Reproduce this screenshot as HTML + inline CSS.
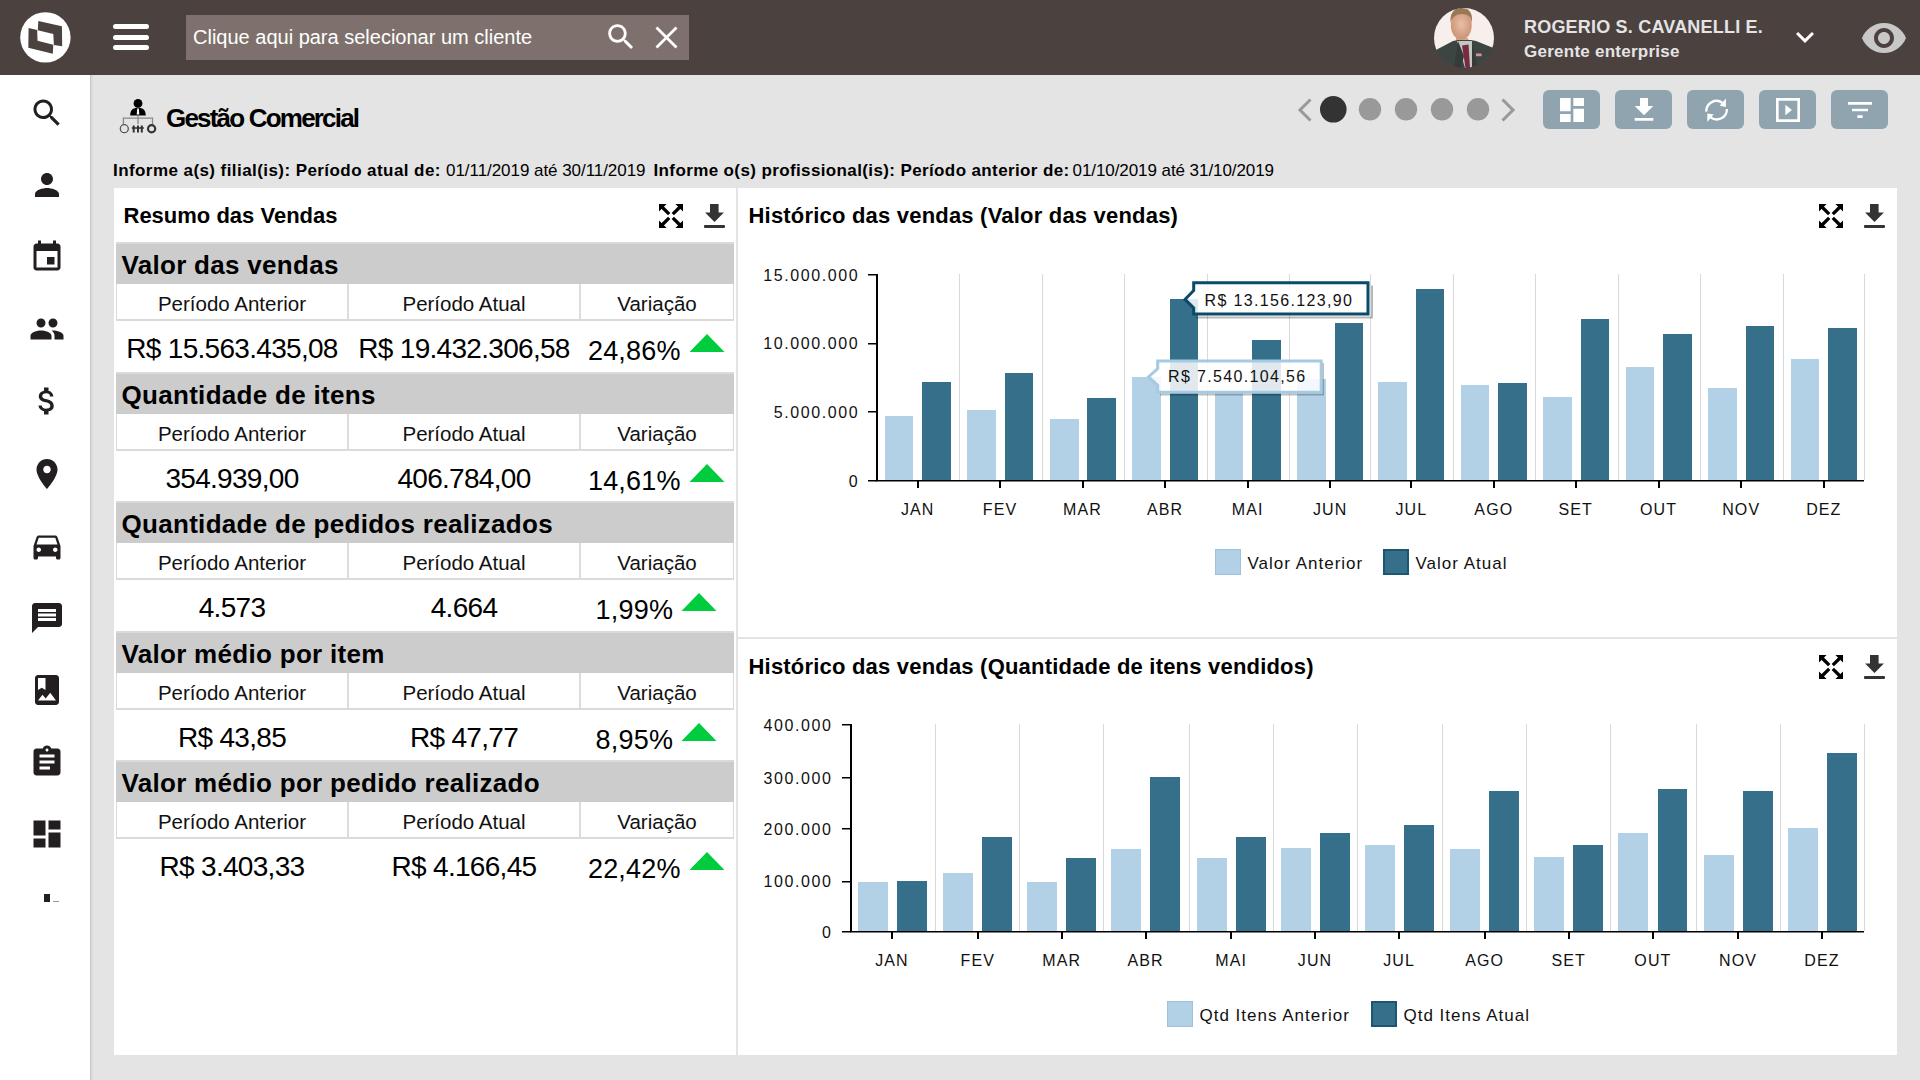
<!DOCTYPE html>
<html><head><meta charset="utf-8"><title>Gestão Comercial</title>
<style>
html,body{margin:0;padding:0;width:1920px;height:1080px;overflow:hidden;background:#e3e3e3;font-family:"Liberation Sans", sans-serif;}
body{position:relative;}
</style></head><body>
<div style="position:absolute;left:0px;top:0px;width:1920px;height:75px;background:#4b4240;"></div>
<svg style="position:absolute;left:15px;top:8px" width="60" height="60" viewBox="0 0 60 60">
<circle cx="30.4" cy="29.4" r="25.2" fill="#fff"/>
<path d="M23.3 13.1 L46.9 18.3 L47.2 38.3 L38.9 36.9 L38.3 26.1 L22.8 22.2 Z" fill="#4b4240"/>
<path d="M13.6 20 L22.2 21.9 L22.5 32.8 L38.3 36.7 L37.8 45.8 L13.3 39.7 Z" fill="#4b4240"/>
</svg>
<div style="position:absolute;left:113px;top:24px;width:36px;height:5px;border-radius:3px;background:#fff"></div>
<div style="position:absolute;left:113px;top:34.5px;width:36px;height:5px;border-radius:3px;background:#fff"></div>
<div style="position:absolute;left:113px;top:45px;width:36px;height:5px;border-radius:3px;background:#fff"></div>
<div style="position:absolute;left:186px;top:15px;width:503px;height:45px;background:#7e716d;"></div>
<div style="position:absolute;top:27.47px;font-size:20px;line-height:20px;font-weight:normal;color:#fff;white-space:nowrap;left:193.00px;">Clique aqui para selecionar um cliente</div>
<svg style="position:absolute;left:604px;top:20px" width="34" height="34" viewBox="0 0 24 24"><path fill="#fff" d="M15.5 14h-.79l-.28-.27C15.41 12.59 16 11.11 16 9.5 16 5.91 13.09 3 9.5 3S3 5.91 3 9.5 5.91 16 9.5 16c1.61 0 3.09-.59 4.23-1.57l.27.28v.79l5 4.99L20.49 19l-4.99-5zm-6 0C7.01 14 5 11.99 5 9.5S7.01 5 9.5 5 14 7.01 14 9.5 11.99 14 9.5 14z"/></svg>
<svg style="position:absolute;left:654px;top:25px" width="25" height="25" viewBox="0 0 25 25"><path d="M2.5 2.5 L22.5 22.5 M22.5 2.5 L2.5 22.5" stroke="#fff" stroke-width="2.8"/></svg>
<svg style="position:absolute;left:1434px;top:8px" width="60" height="60" viewBox="0 0 60 60">
<defs><clipPath id="av"><circle cx="30" cy="30" r="30"/></clipPath>
<filter id="avb"><feGaussianBlur stdDeviation="0.5"/></filter>
<radialGradient id="face" cx="0.5" cy="0.45" r="0.6"><stop offset="0" stop-color="#e9c0a8"/><stop offset="1" stop-color="#c98f6e"/></radialGradient></defs>
<g clip-path="url(#av)"><g filter="url(#avb)">
<rect width="60" height="60" fill="#f7efeb"/>
<path d="M22 30 L34 30 L36 38 L22 38 Z" fill="#d6a287"/>
<path d="M-2 60 L0 43 L19 33 L24 32 L37 32 L42 33 L62 41 L62 60 Z" fill="#3e4542"/>
<path d="M23 33 L38 33 L38 60 L31 60 Z" fill="#c3c9c2"/>
<path d="M28 37.5 L34.5 36.5 L36 60 L31.5 60 Z" fill="#7a2a40"/>
<path d="M24 33 L30 48 L27 60 L20 60 Z" fill="#353b39"/>
<path d="M38 33 L38 60 L44 60 L40 45 Z" fill="#353b39"/>
<ellipse cx="27.3" cy="17.5" rx="10.4" ry="14" fill="url(#face)"/>
<path d="M16.5 15 C15.5 3 22 0 27 0 C34 0 39 3 38 15 C37 9 35 6.5 28 6 C21 6.5 18 9 16.5 15 Z" fill="#9a7854"/>
<rect x="42" y="45.5" width="5.6" height="2.7" fill="#d89090"/>
</g></g></svg>
<div style="position:absolute;top:17.86px;font-size:18px;line-height:18px;font-weight:bold;color:#e4e4e4;white-space:nowrap;letter-spacing:0.2px;left:1524.00px;">ROGERIO S. CAVANELLI E.</div>
<div style="position:absolute;top:43.21px;font-size:17px;line-height:17px;font-weight:bold;color:#e4e4e4;white-space:nowrap;letter-spacing:0.25px;left:1524.00px;">Gerente enterprise</div>
<svg style="position:absolute;left:1787px;top:19px" width="36" height="36" viewBox="0 0 24 24"><path fill="#fff" d="M7.41 8.59L12 13.17l4.59-4.58L18 10l-6 6-6-6 1.41-1.41z"/></svg>
<svg style="position:absolute;left:1860px;top:12px" width="48" height="52" viewBox="0 0 24 24"><path fill="#c8c8c8" d="M12 4.5C7 4.5 2.73 7.61 1 12c1.73 4.39 6 7.5 11 7.5s9.27-3.11 11-7.5c-1.73-4.39-6-7.5-11-7.5zM12 17c-2.76 0-5-2.24-5-5s2.24-5 5-5 5 2.24 5 5-2.24 5-5 5zm0-8c-1.66 0-3 1.34-3 3s1.34 3 3 3 3-1.34 3-3-1.34-3-3-3z"/></svg>
<div style="position:absolute;left:0px;top:75px;width:90px;height:1005px;background:#ffffff;"></div>
<div style="position:absolute;left:90px;top:75px;width:1px;height:1005px;background:#c9c9c9;"></div>
<div style="position:absolute;left:91px;top:75px;width:3px;height:1005px;background:linear-gradient(to right,#d6d6d6,#e3e3e3);"></div>
<svg style="position:absolute;left:28.5px;top:95.0px" width="36" height="36" viewBox="0 0 24 24"><path fill="#231f20" d="M15.5 14h-.79l-.28-.27C15.41 12.59 16 11.11 16 9.5 16 5.91 13.09 3 9.5 3S3 5.91 3 9.5 5.91 16 9.5 16c1.61 0 3.09-.59 4.23-1.57l.27.28v.79l5 4.99L20.49 19l-4.99-5zm-6 0C7.01 14 5 11.99 5 9.5S7.01 5 9.5 5 14 7.01 14 9.5 11.99 14 9.5 14z"/></svg>
<svg style="position:absolute;left:28.5px;top:167.1px" width="36" height="36" viewBox="0 0 24 24"><path fill="#231f20" d="M12 12c2.21 0 4-1.79 4-4s-1.79-4-4-4-4 1.79-4 4 1.79 4 4 4zm0 2c-2.67 0-8 1.34-8 4v2h16v-2c0-2.66-5.33-4-8-4z"/></svg>
<svg style="position:absolute;left:28.5px;top:239.2px" width="36" height="36" viewBox="0 0 24 24"><path fill="#231f20" d="M17 12h-5v5h5v-5zM16 1v2H8V1H6v2H5c-1.11 0-1.99.9-1.99 2L3 19c0 1.1.89 2 2 2h14c1.1 0 2-.9 2-2V5c0-1.1-.9-2-2-2h-1V1h-2zm3 18H5V8h14v11z"/></svg>
<svg style="position:absolute;left:28.5px;top:311.3px" width="36" height="36" viewBox="0 0 24 24"><path fill="#231f20" d="M16 11c1.66 0 2.99-1.34 2.99-3S17.66 5 16 5c-1.66 0-3 1.34-3 3s1.34 3 3 3zm-8 0c1.66 0 2.99-1.34 2.99-3S9.66 5 8 5C6.34 5 5 6.34 5 8s1.34 3 3 3zm0 2c-2.33 0-7 1.17-7 3.5V19h14v-2.5c0-2.33-4.67-3.5-7-3.5zm8 0c-.29 0-.62.02-.97.05 1.16.84 1.970 1.97 1.97 3.45V19h6v-2.5c0-2.33-4.67-3.5-7-3.5z"/></svg>
<svg style="position:absolute;left:28.5px;top:383.4px" width="36" height="36" viewBox="0 0 24 24"><path fill="#231f20" d="M11.8 10.9c-2.27-.59-3-1.2-3-2.15 0-1.09 1.01-1.85 2.7-1.85 1.78 0 2.440.85 2.5 2.1h2.21c-.07-1.72-1.12-3.3-3.21-3.81V3h-3v2.16c-1.94.42-3.5 1.68-3.5 3.61 0 2.310 1.91 3.46 4.7 4.13 2.5.6 3 1.48 3 2.41 0 .69-.49 1.79-2.7 1.79-2.06 0-2.87-.92-2.98-2.1h-2.2c.12 2.19 1.76 3.42 3.68 3.83V21h3v-2.15c1.95-.37 3.5-1.5 3.5-3.55 0-2.84-2.43-3.81-4.7-4.4z"/></svg>
<svg style="position:absolute;left:28.5px;top:455.5px" width="36" height="36" viewBox="0 0 24 24"><path fill="#231f20" d="M12 2C8.13 2 5 5.13 5 9c0 5.25 7 13 7 13s7-7.75 7-13c0-3.87-3.13-7-7-7zm0 9.5c-1.38 0-2.5-1.12-2.5-2.5s1.12-2.5 2.5-2.5 2.5 1.12 2.5 2.5-1.12 2.5-2.5 2.5z"/></svg>
<svg style="position:absolute;left:28.5px;top:527.6px" width="36" height="36" viewBox="0 0 24 24"><path fill="#231f20" d="M18.92 6.01C18.72 5.42 18.16 5 17.5 5h-11c-.66 0-1.21.42-1.42 1.01L3 12v8c0 .55.45 1 1 1h1c.55 0 1-.45 1-1v-1h12v1c0 .55.45 1 1 1h1c.55 0 1-.45 1-1v-8l-2.08-5.990zM6.5 16c-.83 0-1.5-.67-1.5-1.5S5.67 13 6.5 13s1.5.67 1.5 1.5S7.33 16 6.5 16zm11 0c-.83 0-1.5-.67-1.5-1.5s.67-1.5 1.5-1.5 1.5.67 1.5 1.5-.67 1.5-1.5 1.5zM5 11l1.5-4.5h11L19 11H5z"/></svg>
<svg style="position:absolute;left:28.5px;top:599.7px" width="36" height="36" viewBox="0 0 24 24"><path fill="#231f20" d="M20 2H4c-1.1 0-1.99.9-1.99 2L2 22l4-4h14c1.1 0 2-.9 2-2V4c0-1.1-.9-2-2-2zm-2 12H6v-2h12v2zm0-3H6V9h12v2zm0-3H6V6h12v2z"/></svg>
<svg style="position:absolute;left:28.5px;top:671.8px" width="36" height="36" viewBox="0 0 24 24"><path fill="#231f20" d="M18 2H6c-1.1 0-2 .9-2 2v16c0 1.1.9 2 2 2h12c1.1 0 2-.9 2-2V4c0-1.1-.9-2-2-2zM6 4h5v8l-2.5-1.5L6 12V4zm0 15l3-3.86 2.14 2.58 3-3.86L18 19H6z"/></svg>
<svg style="position:absolute;left:28.5px;top:743.9px" width="36" height="36" viewBox="0 0 24 24"><path fill="#231f20" d="M19 3h-4.18C14.4 1.84 13.3 1 12 1c-1.3 0-2.4.84-2.82 2H5c-1.1 0-2 .9-2 2v14c0 1.1.9 2 2 2h14c1.1 0 2-.9 2-2V5c0-1.1-.9-2-2-2zm-7 0c.55 0 1 .45 1 1s-.45 1-1 1-1-.45-1-1 .45-1 1-1zm2 14H7v-2h7v2zm3-4H7v-2h10v2zm0-4H7V7h10v2z"/></svg>
<svg style="position:absolute;left:28.5px;top:816.0px" width="36" height="36" viewBox="0 0 24 24"><path fill="#231f20" d="M3 13h8V3H3v10zm0 8h8v-6H3v6zm10 0h8V11h-8v10zm0-18v6h8V3h-8z"/></svg>
<div style="position:absolute;left:44px;top:894px;width:6px;height:8px;background:#231f20;"></div>
<div style="position:absolute;left:53px;top:901px;width:6px;height:1px;background:#999;"></div>
<div style="position:absolute;left:94px;top:75px;width:1826px;height:1005px;background:#e4e4e4;"></div>
<svg style="position:absolute;left:115px;top:95px" width="45" height="42" viewBox="0 0 45 42">
<circle cx="23" cy="8.4" r="4.4" fill="#000"/>
<path d="M15.2 20.4 C15.2 15 18 12.8 23 12.8 C28 12.8 30.7 15 30.7 20.4 Z" fill="#000"/>
<path d="M22.2 13.5 L23.8 13.5 L24.3 19.5 L21.7 19.5 Z" fill="#fff"/>
<path d="M8.4 29 L8.4 23.2 L37.5 23.2 L37.5 29 M23 21 L23 29" stroke="#888" stroke-width="1.3" fill="none"/>
<circle cx="9.3" cy="33.7" r="4" stroke="#555" stroke-width="1.3" fill="none"/>
<path d="M18.7 30.5 v7 M23 30.5 v7 M26.8 30.5 v7" stroke="#333" stroke-width="2"/><path d="M16.8 33 h12" stroke="#333" stroke-width="1.6"/>
<circle cx="36.6" cy="33.7" r="3.6" stroke="#333" stroke-width="2.2" fill="none"/>
</svg>
<div style="position:absolute;top:105.19px;font-size:26px;line-height:26px;font-weight:bold;color:#000;white-space:nowrap;letter-spacing:-1.8px;left:166.00px;">Gestão Comercial</div>
<svg style="position:absolute;left:1290px;top:92px" width="240" height="36" viewBox="0 0 240 36"><path d="M20.5 7.5 L10 18 L20.5 28.5" stroke="#999" stroke-width="3" fill="none"/><circle cx="43.3" cy="17.3" r="13.3" fill="#333"/><circle cx="80" cy="17.3" r="11.2" fill="#999"/><circle cx="116" cy="17.3" r="11.2" fill="#999"/><circle cx="152" cy="17.3" r="11.2" fill="#999"/><circle cx="188" cy="17.3" r="11.2" fill="#999"/><path d="M212.5 7.5 L223 18 L212.5 28.5" stroke="#999" stroke-width="3" fill="none"/></svg>
<div style="position:absolute;left:1543px;top:90px;width:57px;height:39px;background:#8fa4ae;border-radius:6px;"></div>
<svg style="position:absolute;left:1555.5px;top:93.5px" width="32" height="32" viewBox="0 0 24 24"><path fill="#fff" d="M3 13h8V3H3v10zm0 8h8v-6H3v6zm10 0h8V11h-8v10zm0-18v6h8V3h-8z"/></svg>
<div style="position:absolute;left:1615px;top:90px;width:57px;height:39px;background:#8fa4ae;border-radius:6px;"></div>
<svg style="position:absolute;left:1627.5px;top:93.5px" width="32" height="32" viewBox="0 0 24 24"><path fill="#fff" d="M19 9h-4V3H9v6H5l7 7 7-7zM5 18v2h14v-2H5z"/></svg>
<div style="position:absolute;left:1687px;top:90px;width:57px;height:39px;background:#8fa4ae;border-radius:6px;"></div>
<svg style="position:absolute;left:1699.5px;top:93.5px" width="32" height="32" viewBox="0 0 24 24"><g transform="scale(0.75)"><path d="M6.3 17.6 A10.2 10.2 0 0 1 22.6 9" stroke="#fff" stroke-width="2.4" fill="none"/><path d="M26.9 15 A10.2 10.2 0 0 1 10.6 23.4" stroke="#fff" stroke-width="2.4" fill="none"/><path d="M25.9 4.5 L25.9 12.9 L19.6 11.8 Z M7.3 27.9 L7.3 19.5 L13.6 20.6 Z" fill="#fff"/></g></svg>
<div style="position:absolute;left:1759px;top:90px;width:57px;height:39px;background:#8fa4ae;border-radius:6px;"></div>
<svg style="position:absolute;left:1771.5px;top:93.5px" width="32" height="32" viewBox="0 0 24 24"><path fill="#fff" d="M3 3 h18 v18 h-18 z M5 5 v14 h14 v-14 z M10 8 l5 4 l-5 4 z"/></svg>
<div style="position:absolute;left:1831px;top:90px;width:57px;height:39px;background:#8fa4ae;border-radius:6px;"></div>
<svg style="position:absolute;left:1843.5px;top:93.5px" width="32" height="32" viewBox="0 0 24 24"><path fill="#fff" d="M10 18h4v-2h-4v2zM3 6v2h18V6H3zm3 7h12v-2H6v2z"/></svg>
<div style="position:absolute;top:162.01px;font-size:17px;line-height:17px;font-weight:bold;color:#000;white-space:nowrap;letter-spacing:0.43px;left:113.00px;">Informe a(s) filial(is): Período atual de:</div>
<div style="position:absolute;top:162.01px;font-size:17px;line-height:17px;font-weight:normal;color:#000;white-space:nowrap;letter-spacing:-0.05px;left:446.00px;">01/11/2019 até 30/11/2019</div>
<div style="position:absolute;top:162.01px;font-size:17px;line-height:17px;font-weight:bold;color:#000;white-space:nowrap;letter-spacing:0.38px;left:653.50px;">Informe o(s) profissional(is): Período anterior de:</div>
<div style="position:absolute;top:162.01px;font-size:17px;line-height:17px;font-weight:normal;color:#000;white-space:nowrap;letter-spacing:-0.07px;left:1072.50px;">01/10/2019 até 31/10/2019</div>
<div style="position:absolute;left:114px;top:188px;width:1783px;height:867px;background:#ffffff;"></div>
<div style="position:absolute;left:736px;top:188px;width:2px;height:867px;background:#e4e4e4;"></div>
<div style="position:absolute;left:738px;top:637px;width:1159px;height:2px;background:#e4e4e4;"></div>
<div style="position:absolute;top:204.78px;font-size:22px;line-height:22px;font-weight:bold;color:#000;white-space:nowrap;left:123.50px;">Resumo das Vendas</div>
<svg style="position:absolute;left:659px;top:204px" width="24" height="24" viewBox="0 0 24 24">
<path fill="#000" d="M0 0h7.6L0 7.6z M24 0h-7.6L24 7.6z M0 24h7.6L0 16.4z M24 24h-7.6L24 16.4z"/>
<path d="M3 3 L10.2 10.2 M21 3 L13.8 10.2 M3 21 L10.2 13.8 M21 21 L13.8 13.8" stroke="#000" stroke-width="3.3"/>
</svg>
<svg style="position:absolute;left:704px;top:204px" width="21" height="24" viewBox="0 0 21 24">
<path fill="#333" d="M6 0h8.6v8.5h5.3l-9.4 9.4-9.4-9.4h4.9z"/><rect x="0" y="21" width="21" height="3" rx="1" fill="#333"/>
</svg>
<div style="position:absolute;left:116px;top:242px;width:618px;height:2px;background:#dadada;"></div>
<div style="position:absolute;left:116px;top:244px;width:618px;height:40px;background:#cccccc;"></div>
<div style="position:absolute;top:251.89px;font-size:26px;line-height:26px;font-weight:bold;color:#000;white-space:nowrap;letter-spacing:0.3px;left:121.50px;">Valor das vendas</div>
<div style="position:absolute;left:116px;top:284px;width:1px;height:37px;background:#dadada;"></div>
<div style="position:absolute;left:733px;top:284px;width:1px;height:37px;background:#dadada;"></div>
<div style="position:absolute;left:116px;top:319px;width:618px;height:2px;background:#dadada;"></div>
<div style="position:absolute;left:347px;top:284px;width:2px;height:35px;background:#dcdcdc;"></div>
<div style="position:absolute;left:579px;top:284px;width:2px;height:35px;background:#dcdcdc;"></div>
<div style="position:absolute;top:293.55px;font-size:20.5px;line-height:20.5px;font-weight:normal;color:#111;white-space:nowrap;left:-268.00px;width:1000px;text-align:center;">Período Anterior</div>
<div style="position:absolute;top:293.55px;font-size:20.5px;line-height:20.5px;font-weight:normal;color:#111;white-space:nowrap;left:-36.00px;width:1000px;text-align:center;">Período Atual</div>
<div style="position:absolute;top:293.55px;font-size:20.5px;line-height:20.5px;font-weight:normal;color:#111;white-space:nowrap;left:157.00px;width:1000px;text-align:center;">Variação</div>
<div style="position:absolute;top:335.00px;font-size:28px;line-height:28px;font-weight:normal;color:#000;white-space:nowrap;letter-spacing:-0.7px;left:-268.00px;width:1000px;text-align:center;">R$ 15.563.435,08</div>
<div style="position:absolute;top:335.00px;font-size:28px;line-height:28px;font-weight:normal;color:#000;white-space:nowrap;letter-spacing:-0.7px;left:-36.00px;width:1000px;text-align:center;">R$ 19.432.306,58</div>
<div style="position:absolute;top:337.54px;font-size:27px;line-height:27px;font-weight:normal;color:#000;white-space:nowrap;letter-spacing:0.2px;left:587.95px;">24,86%</div>
<svg style="position:absolute;left:689.0px;top:334px" width="36" height="18" viewBox="0 0 36 18"><path d="M18 0 L35.5 18 L0.5 18Z" fill="#00cc3d"/></svg>
<div style="position:absolute;left:116px;top:372px;width:618px;height:2px;background:#dadada;"></div>
<div style="position:absolute;left:116px;top:374px;width:618px;height:40px;background:#cccccc;"></div>
<div style="position:absolute;top:381.89px;font-size:26px;line-height:26px;font-weight:bold;color:#000;white-space:nowrap;letter-spacing:0.3px;left:121.50px;">Quantidade de itens</div>
<div style="position:absolute;left:116px;top:414px;width:1px;height:37px;background:#dadada;"></div>
<div style="position:absolute;left:733px;top:414px;width:1px;height:37px;background:#dadada;"></div>
<div style="position:absolute;left:116px;top:449px;width:618px;height:2px;background:#dadada;"></div>
<div style="position:absolute;left:347px;top:414px;width:2px;height:35px;background:#dcdcdc;"></div>
<div style="position:absolute;left:579px;top:414px;width:2px;height:35px;background:#dcdcdc;"></div>
<div style="position:absolute;top:423.55px;font-size:20.5px;line-height:20.5px;font-weight:normal;color:#111;white-space:nowrap;left:-268.00px;width:1000px;text-align:center;">Período Anterior</div>
<div style="position:absolute;top:423.55px;font-size:20.5px;line-height:20.5px;font-weight:normal;color:#111;white-space:nowrap;left:-36.00px;width:1000px;text-align:center;">Período Atual</div>
<div style="position:absolute;top:423.55px;font-size:20.5px;line-height:20.5px;font-weight:normal;color:#111;white-space:nowrap;left:157.00px;width:1000px;text-align:center;">Variação</div>
<div style="position:absolute;top:465.00px;font-size:28px;line-height:28px;font-weight:normal;color:#000;white-space:nowrap;letter-spacing:-0.7px;left:-268.00px;width:1000px;text-align:center;">354.939,00</div>
<div style="position:absolute;top:465.00px;font-size:28px;line-height:28px;font-weight:normal;color:#000;white-space:nowrap;letter-spacing:-0.7px;left:-36.00px;width:1000px;text-align:center;">406.784,00</div>
<div style="position:absolute;top:467.54px;font-size:27px;line-height:27px;font-weight:normal;color:#000;white-space:nowrap;letter-spacing:0.2px;left:587.95px;">14,61%</div>
<svg style="position:absolute;left:689.0px;top:464px" width="36" height="18" viewBox="0 0 36 18"><path d="M18 0 L35.5 18 L0.5 18Z" fill="#00cc3d"/></svg>
<div style="position:absolute;left:116px;top:501px;width:618px;height:2px;background:#dadada;"></div>
<div style="position:absolute;left:116px;top:503px;width:618px;height:40px;background:#cccccc;"></div>
<div style="position:absolute;top:510.89px;font-size:26px;line-height:26px;font-weight:bold;color:#000;white-space:nowrap;letter-spacing:0.3px;left:121.50px;">Quantidade de pedidos realizados</div>
<div style="position:absolute;left:116px;top:543px;width:1px;height:37px;background:#dadada;"></div>
<div style="position:absolute;left:733px;top:543px;width:1px;height:37px;background:#dadada;"></div>
<div style="position:absolute;left:116px;top:578px;width:618px;height:2px;background:#dadada;"></div>
<div style="position:absolute;left:347px;top:543px;width:2px;height:35px;background:#dcdcdc;"></div>
<div style="position:absolute;left:579px;top:543px;width:2px;height:35px;background:#dcdcdc;"></div>
<div style="position:absolute;top:552.55px;font-size:20.5px;line-height:20.5px;font-weight:normal;color:#111;white-space:nowrap;left:-268.00px;width:1000px;text-align:center;">Período Anterior</div>
<div style="position:absolute;top:552.55px;font-size:20.5px;line-height:20.5px;font-weight:normal;color:#111;white-space:nowrap;left:-36.00px;width:1000px;text-align:center;">Período Atual</div>
<div style="position:absolute;top:552.55px;font-size:20.5px;line-height:20.5px;font-weight:normal;color:#111;white-space:nowrap;left:157.00px;width:1000px;text-align:center;">Variação</div>
<div style="position:absolute;top:594.00px;font-size:28px;line-height:28px;font-weight:normal;color:#000;white-space:nowrap;letter-spacing:-0.7px;left:-268.00px;width:1000px;text-align:center;">4.573</div>
<div style="position:absolute;top:594.00px;font-size:28px;line-height:28px;font-weight:normal;color:#000;white-space:nowrap;letter-spacing:-0.7px;left:-36.00px;width:1000px;text-align:center;">4.664</div>
<div style="position:absolute;top:596.54px;font-size:27px;line-height:27px;font-weight:normal;color:#000;white-space:nowrap;letter-spacing:0.2px;left:595.55px;">1,99%</div>
<svg style="position:absolute;left:681.4px;top:593px" width="36" height="18" viewBox="0 0 36 18"><path d="M18 0 L35.5 18 L0.5 18Z" fill="#00cc3d"/></svg>
<div style="position:absolute;left:116px;top:631px;width:618px;height:2px;background:#dadada;"></div>
<div style="position:absolute;left:116px;top:633px;width:618px;height:40px;background:#cccccc;"></div>
<div style="position:absolute;top:640.89px;font-size:26px;line-height:26px;font-weight:bold;color:#000;white-space:nowrap;letter-spacing:0.3px;left:121.50px;">Valor médio por item</div>
<div style="position:absolute;left:116px;top:673px;width:1px;height:37px;background:#dadada;"></div>
<div style="position:absolute;left:733px;top:673px;width:1px;height:37px;background:#dadada;"></div>
<div style="position:absolute;left:116px;top:708px;width:618px;height:2px;background:#dadada;"></div>
<div style="position:absolute;left:347px;top:673px;width:2px;height:35px;background:#dcdcdc;"></div>
<div style="position:absolute;left:579px;top:673px;width:2px;height:35px;background:#dcdcdc;"></div>
<div style="position:absolute;top:682.55px;font-size:20.5px;line-height:20.5px;font-weight:normal;color:#111;white-space:nowrap;left:-268.00px;width:1000px;text-align:center;">Período Anterior</div>
<div style="position:absolute;top:682.55px;font-size:20.5px;line-height:20.5px;font-weight:normal;color:#111;white-space:nowrap;left:-36.00px;width:1000px;text-align:center;">Período Atual</div>
<div style="position:absolute;top:682.55px;font-size:20.5px;line-height:20.5px;font-weight:normal;color:#111;white-space:nowrap;left:157.00px;width:1000px;text-align:center;">Variação</div>
<div style="position:absolute;top:724.00px;font-size:28px;line-height:28px;font-weight:normal;color:#000;white-space:nowrap;letter-spacing:-0.7px;left:-268.00px;width:1000px;text-align:center;">R$ 43,85</div>
<div style="position:absolute;top:724.00px;font-size:28px;line-height:28px;font-weight:normal;color:#000;white-space:nowrap;letter-spacing:-0.7px;left:-36.00px;width:1000px;text-align:center;">R$ 47,77</div>
<div style="position:absolute;top:726.54px;font-size:27px;line-height:27px;font-weight:normal;color:#000;white-space:nowrap;letter-spacing:0.2px;left:595.55px;">8,95%</div>
<svg style="position:absolute;left:681.4px;top:723px" width="36" height="18" viewBox="0 0 36 18"><path d="M18 0 L35.5 18 L0.5 18Z" fill="#00cc3d"/></svg>
<div style="position:absolute;left:116px;top:760px;width:618px;height:2px;background:#dadada;"></div>
<div style="position:absolute;left:116px;top:762px;width:618px;height:40px;background:#cccccc;"></div>
<div style="position:absolute;top:769.89px;font-size:26px;line-height:26px;font-weight:bold;color:#000;white-space:nowrap;letter-spacing:0.3px;left:121.50px;">Valor médio por pedido realizado</div>
<div style="position:absolute;left:116px;top:802px;width:1px;height:37px;background:#dadada;"></div>
<div style="position:absolute;left:733px;top:802px;width:1px;height:37px;background:#dadada;"></div>
<div style="position:absolute;left:116px;top:837px;width:618px;height:2px;background:#dadada;"></div>
<div style="position:absolute;left:347px;top:802px;width:2px;height:35px;background:#dcdcdc;"></div>
<div style="position:absolute;left:579px;top:802px;width:2px;height:35px;background:#dcdcdc;"></div>
<div style="position:absolute;top:811.55px;font-size:20.5px;line-height:20.5px;font-weight:normal;color:#111;white-space:nowrap;left:-268.00px;width:1000px;text-align:center;">Período Anterior</div>
<div style="position:absolute;top:811.55px;font-size:20.5px;line-height:20.5px;font-weight:normal;color:#111;white-space:nowrap;left:-36.00px;width:1000px;text-align:center;">Período Atual</div>
<div style="position:absolute;top:811.55px;font-size:20.5px;line-height:20.5px;font-weight:normal;color:#111;white-space:nowrap;left:157.00px;width:1000px;text-align:center;">Variação</div>
<div style="position:absolute;top:853.00px;font-size:28px;line-height:28px;font-weight:normal;color:#000;white-space:nowrap;letter-spacing:-0.7px;left:-268.00px;width:1000px;text-align:center;">R$ 3.403,33</div>
<div style="position:absolute;top:853.00px;font-size:28px;line-height:28px;font-weight:normal;color:#000;white-space:nowrap;letter-spacing:-0.7px;left:-36.00px;width:1000px;text-align:center;">R$ 4.166,45</div>
<div style="position:absolute;top:855.54px;font-size:27px;line-height:27px;font-weight:normal;color:#000;white-space:nowrap;letter-spacing:0.2px;left:587.95px;">22,42%</div>
<svg style="position:absolute;left:689.0px;top:852px" width="36" height="18" viewBox="0 0 36 18"><path d="M18 0 L35.5 18 L0.5 18Z" fill="#00cc3d"/></svg>
<div style="position:absolute;top:204.58px;font-size:22px;line-height:22px;font-weight:bold;color:#000;white-space:nowrap;letter-spacing:0.2px;left:748.50px;">Histórico das vendas (Valor das vendas)</div>
<svg style="position:absolute;left:1819px;top:203.8px" width="24" height="24" viewBox="0 0 24 24">
<path fill="#000" d="M0 0h7.6L0 7.6z M24 0h-7.6L24 7.6z M0 24h7.6L0 16.4z M24 24h-7.6L24 16.4z"/>
<path d="M3 3 L10.2 10.2 M21 3 L13.8 10.2 M3 21 L10.2 13.8 M21 21 L13.8 13.8" stroke="#000" stroke-width="3.3"/>
</svg>
<svg style="position:absolute;left:1864px;top:203.8px" width="21" height="24" viewBox="0 0 21 24">
<path fill="#333" d="M6 0h8.6v8.5h5.3l-9.4 9.4-9.4-9.4h4.9z"/><rect x="0" y="21" width="21" height="3" rx="1" fill="#333"/>
</svg>
<div style="position:absolute;left:959px;top:274px;width:1px;height:206px;background:#d9d9d9;"></div>
<div style="position:absolute;left:1042px;top:274px;width:1px;height:206px;background:#d9d9d9;"></div>
<div style="position:absolute;left:1124px;top:274px;width:1px;height:206px;background:#d9d9d9;"></div>
<div style="position:absolute;left:1207px;top:274px;width:1px;height:206px;background:#d9d9d9;"></div>
<div style="position:absolute;left:1289px;top:274px;width:1px;height:206px;background:#d9d9d9;"></div>
<div style="position:absolute;left:1370px;top:274px;width:1px;height:206px;background:#d9d9d9;"></div>
<div style="position:absolute;left:1453px;top:274px;width:1px;height:206px;background:#d9d9d9;"></div>
<div style="position:absolute;left:1535px;top:274px;width:1px;height:206px;background:#d9d9d9;"></div>
<div style="position:absolute;left:1618px;top:274px;width:1px;height:206px;background:#d9d9d9;"></div>
<div style="position:absolute;left:1700px;top:274px;width:1px;height:206px;background:#d9d9d9;"></div>
<div style="position:absolute;left:1783px;top:274px;width:1px;height:206px;background:#d9d9d9;"></div>
<div style="position:absolute;left:1864px;top:274px;width:1px;height:206px;background:#d9d9d9;"></div>
<div style="position:absolute;left:885px;top:416px;width:28px;height:64px;background:#b3d1e6;"></div>
<div style="position:absolute;left:922px;top:382px;width:29px;height:98px;background:#356f8a;"></div>
<div style="position:absolute;left:967px;top:410px;width:29px;height:70px;background:#b3d1e6;"></div>
<div style="position:absolute;left:1005px;top:373px;width:28px;height:107px;background:#356f8a;"></div>
<div style="position:absolute;left:1050px;top:419px;width:29px;height:61px;background:#b3d1e6;"></div>
<div style="position:absolute;left:1087px;top:398px;width:29px;height:82px;background:#356f8a;"></div>
<div style="position:absolute;left:1132px;top:377px;width:29px;height:103px;background:#b3d1e6;"></div>
<div style="position:absolute;left:1170px;top:299px;width:28px;height:181px;background:#356f8a;"></div>
<div style="position:absolute;left:1215px;top:392px;width:28px;height:88px;background:#b3d1e6;"></div>
<div style="position:absolute;left:1252px;top:340px;width:29px;height:140px;background:#356f8a;"></div>
<div style="position:absolute;left:1297px;top:379px;width:29px;height:101px;background:#b3d1e6;"></div>
<div style="position:absolute;left:1335px;top:323px;width:28px;height:157px;background:#356f8a;"></div>
<div style="position:absolute;left:1378px;top:382px;width:29px;height:98px;background:#b3d1e6;"></div>
<div style="position:absolute;left:1416px;top:289px;width:28px;height:191px;background:#356f8a;"></div>
<div style="position:absolute;left:1461px;top:385px;width:28px;height:95px;background:#b3d1e6;"></div>
<div style="position:absolute;left:1498px;top:383px;width:29px;height:97px;background:#356f8a;"></div>
<div style="position:absolute;left:1543px;top:397px;width:29px;height:83px;background:#b3d1e6;"></div>
<div style="position:absolute;left:1581px;top:319px;width:28px;height:161px;background:#356f8a;"></div>
<div style="position:absolute;left:1626px;top:367px;width:28px;height:113px;background:#b3d1e6;"></div>
<div style="position:absolute;left:1663px;top:334px;width:29px;height:146px;background:#356f8a;"></div>
<div style="position:absolute;left:1708px;top:388px;width:29px;height:92px;background:#b3d1e6;"></div>
<div style="position:absolute;left:1746px;top:326px;width:28px;height:154px;background:#356f8a;"></div>
<div style="position:absolute;left:1791px;top:359px;width:28px;height:121px;background:#b3d1e6;"></div>
<div style="position:absolute;left:1828px;top:328px;width:29px;height:152px;background:#356f8a;"></div>
<div style="position:absolute;left:876px;top:274px;width:2px;height:207px;background:#000;"></div>
<div style="position:absolute;left:876px;top:480px;width:988px;height:1px;background:#000;"></div>
<div style="position:absolute;left:876px;top:481px;width:988px;height:1px;background:rgba(0,0,0,0.5);"></div>
<div style="position:absolute;left:868px;top:274px;width:9px;height:1px;background:#000;"></div>
<div style="position:absolute;left:868px;top:275px;width:9px;height:1px;background:rgba(0,0,0,0.5);"></div>
<div style="position:absolute;top:267.66px;font-size:16px;line-height:16px;font-weight:normal;color:#111;white-space:nowrap;letter-spacing:1.6px;left:-140.70px;width:1000px;text-align:right;">15.000.000</div>
<div style="position:absolute;left:868px;top:343px;width:9px;height:1px;background:#000;"></div>
<div style="position:absolute;left:868px;top:344px;width:9px;height:1px;background:rgba(0,0,0,0.5);"></div>
<div style="position:absolute;top:336.36px;font-size:16px;line-height:16px;font-weight:normal;color:#111;white-space:nowrap;letter-spacing:1.6px;left:-140.70px;width:1000px;text-align:right;">10.000.000</div>
<div style="position:absolute;left:868px;top:411px;width:9px;height:1px;background:#000;"></div>
<div style="position:absolute;left:868px;top:412px;width:9px;height:1px;background:rgba(0,0,0,0.5);"></div>
<div style="position:absolute;top:404.96px;font-size:16px;line-height:16px;font-weight:normal;color:#111;white-space:nowrap;letter-spacing:1.6px;left:-140.70px;width:1000px;text-align:right;">5.000.000</div>
<div style="position:absolute;left:868px;top:480px;width:9px;height:1px;background:#000;"></div>
<div style="position:absolute;left:868px;top:481px;width:9px;height:1px;background:rgba(0,0,0,0.5);"></div>
<div style="position:absolute;top:473.66px;font-size:16px;line-height:16px;font-weight:normal;color:#111;white-space:nowrap;letter-spacing:1.6px;left:-140.70px;width:1000px;text-align:right;">0</div>
<div style="position:absolute;left:917px;top:480px;width:2px;height:8px;background:#000;"></div>
<div style="position:absolute;top:501.86px;font-size:16px;line-height:16px;font-weight:normal;color:#111;white-space:nowrap;letter-spacing:1.1px;left:417.70px;width:1000px;text-align:center;">JAN</div>
<div style="position:absolute;left:999px;top:480px;width:2px;height:8px;background:#000;"></div>
<div style="position:absolute;top:501.86px;font-size:16px;line-height:16px;font-weight:normal;color:#111;white-space:nowrap;letter-spacing:1.1px;left:500.00px;width:1000px;text-align:center;">FEV</div>
<div style="position:absolute;left:1082px;top:480px;width:2px;height:8px;background:#000;"></div>
<div style="position:absolute;top:501.86px;font-size:16px;line-height:16px;font-weight:normal;color:#111;white-space:nowrap;letter-spacing:1.1px;left:582.50px;width:1000px;text-align:center;">MAR</div>
<div style="position:absolute;left:1164px;top:480px;width:2px;height:8px;background:#000;"></div>
<div style="position:absolute;top:501.86px;font-size:16px;line-height:16px;font-weight:normal;color:#111;white-space:nowrap;letter-spacing:1.1px;left:665.00px;width:1000px;text-align:center;">ABR</div>
<div style="position:absolute;left:1247px;top:480px;width:2px;height:8px;background:#000;"></div>
<div style="position:absolute;top:501.86px;font-size:16px;line-height:16px;font-weight:normal;color:#111;white-space:nowrap;letter-spacing:1.1px;left:747.70px;width:1000px;text-align:center;">MAI</div>
<div style="position:absolute;left:1329px;top:480px;width:2px;height:8px;background:#000;"></div>
<div style="position:absolute;top:501.86px;font-size:16px;line-height:16px;font-weight:normal;color:#111;white-space:nowrap;letter-spacing:1.1px;left:830.10px;width:1000px;text-align:center;">JUN</div>
<div style="position:absolute;left:1410px;top:480px;width:2px;height:8px;background:#000;"></div>
<div style="position:absolute;top:501.86px;font-size:16px;line-height:16px;font-weight:normal;color:#111;white-space:nowrap;letter-spacing:1.1px;left:911.40px;width:1000px;text-align:center;">JUL</div>
<div style="position:absolute;left:1493px;top:480px;width:2px;height:8px;background:#000;"></div>
<div style="position:absolute;top:501.86px;font-size:16px;line-height:16px;font-weight:normal;color:#111;white-space:nowrap;letter-spacing:1.1px;left:993.80px;width:1000px;text-align:center;">AGO</div>
<div style="position:absolute;left:1575px;top:480px;width:2px;height:8px;background:#000;"></div>
<div style="position:absolute;top:501.86px;font-size:16px;line-height:16px;font-weight:normal;color:#111;white-space:nowrap;letter-spacing:1.1px;left:1075.80px;width:1000px;text-align:center;">SET</div>
<div style="position:absolute;left:1658px;top:480px;width:2px;height:8px;background:#000;"></div>
<div style="position:absolute;top:501.86px;font-size:16px;line-height:16px;font-weight:normal;color:#111;white-space:nowrap;letter-spacing:1.1px;left:1158.60px;width:1000px;text-align:center;">OUT</div>
<div style="position:absolute;left:1740px;top:480px;width:2px;height:8px;background:#000;"></div>
<div style="position:absolute;top:501.86px;font-size:16px;line-height:16px;font-weight:normal;color:#111;white-space:nowrap;letter-spacing:1.1px;left:1241.20px;width:1000px;text-align:center;">NOV</div>
<div style="position:absolute;left:1823px;top:480px;width:2px;height:8px;background:#000;"></div>
<div style="position:absolute;top:501.86px;font-size:16px;line-height:16px;font-weight:normal;color:#111;white-space:nowrap;letter-spacing:1.1px;left:1323.80px;width:1000px;text-align:center;">DEZ</div>
<div style="position:absolute;left:1215px;top:549px;width:26px;height:26px;background:#b3d1e6;box-sizing:border-box;border:1px solid #9fc3dc;"></div>
<div style="position:absolute;top:554.71px;font-size:17px;line-height:17px;font-weight:normal;color:#111;white-space:nowrap;letter-spacing:1.0px;left:1247.50px;">Valor Anterior</div>
<div style="position:absolute;left:1383px;top:549px;width:26px;height:26px;background:#356f8a;box-sizing:border-box;border:2px solid #1d5673;"></div>
<div style="position:absolute;top:554.71px;font-size:17px;line-height:17px;font-weight:normal;color:#111;white-space:nowrap;letter-spacing:1.0px;left:1415.50px;">Valor Atual</div>
<div style="position:absolute;top:655.78px;font-size:22px;line-height:22px;font-weight:bold;color:#000;white-space:nowrap;letter-spacing:0.2px;left:748.50px;">Histórico das vendas (Quantidade de itens vendidos)</div>
<svg style="position:absolute;left:1819px;top:655px" width="24" height="24" viewBox="0 0 24 24">
<path fill="#000" d="M0 0h7.6L0 7.6z M24 0h-7.6L24 7.6z M0 24h7.6L0 16.4z M24 24h-7.6L24 16.4z"/>
<path d="M3 3 L10.2 10.2 M21 3 L13.8 10.2 M3 21 L10.2 13.8 M21 21 L13.8 13.8" stroke="#000" stroke-width="3.3"/>
</svg>
<svg style="position:absolute;left:1864px;top:655px" width="21" height="24" viewBox="0 0 21 24">
<path fill="#333" d="M6 0h8.6v8.5h5.3l-9.4 9.4-9.4-9.4h4.9z"/><rect x="0" y="21" width="21" height="3" rx="1" fill="#333"/>
</svg>
<div style="position:absolute;left:935px;top:724px;width:1px;height:207px;background:#d9d9d9;"></div>
<div style="position:absolute;left:1019px;top:724px;width:1px;height:207px;background:#d9d9d9;"></div>
<div style="position:absolute;left:1103px;top:724px;width:1px;height:207px;background:#d9d9d9;"></div>
<div style="position:absolute;left:1189px;top:724px;width:1px;height:207px;background:#d9d9d9;"></div>
<div style="position:absolute;left:1273px;top:724px;width:1px;height:207px;background:#d9d9d9;"></div>
<div style="position:absolute;left:1357px;top:724px;width:1px;height:207px;background:#d9d9d9;"></div>
<div style="position:absolute;left:1442px;top:724px;width:1px;height:207px;background:#d9d9d9;"></div>
<div style="position:absolute;left:1526px;top:724px;width:1px;height:207px;background:#d9d9d9;"></div>
<div style="position:absolute;left:1610px;top:724px;width:1px;height:207px;background:#d9d9d9;"></div>
<div style="position:absolute;left:1696px;top:724px;width:1px;height:207px;background:#d9d9d9;"></div>
<div style="position:absolute;left:1780px;top:724px;width:1px;height:207px;background:#d9d9d9;"></div>
<div style="position:absolute;left:1864px;top:724px;width:1px;height:207px;background:#d9d9d9;"></div>
<div style="position:absolute;left:858px;top:882px;width:30px;height:49px;background:#b3d1e6;"></div>
<div style="position:absolute;left:897px;top:881px;width:30px;height:50px;background:#356f8a;"></div>
<div style="position:absolute;left:943px;top:873px;width:30px;height:58px;background:#b3d1e6;"></div>
<div style="position:absolute;left:982px;top:837px;width:30px;height:94px;background:#356f8a;"></div>
<div style="position:absolute;left:1027px;top:882px;width:30px;height:49px;background:#b3d1e6;"></div>
<div style="position:absolute;left:1066px;top:858px;width:30px;height:73px;background:#356f8a;"></div>
<div style="position:absolute;left:1111px;top:849px;width:30px;height:82px;background:#b3d1e6;"></div>
<div style="position:absolute;left:1150px;top:777px;width:30px;height:154px;background:#356f8a;"></div>
<div style="position:absolute;left:1197px;top:858px;width:30px;height:73px;background:#b3d1e6;"></div>
<div style="position:absolute;left:1236px;top:837px;width:30px;height:94px;background:#356f8a;"></div>
<div style="position:absolute;left:1281px;top:848px;width:30px;height:83px;background:#b3d1e6;"></div>
<div style="position:absolute;left:1320px;top:833px;width:30px;height:98px;background:#356f8a;"></div>
<div style="position:absolute;left:1365px;top:845px;width:30px;height:86px;background:#b3d1e6;"></div>
<div style="position:absolute;left:1404px;top:825px;width:30px;height:106px;background:#356f8a;"></div>
<div style="position:absolute;left:1450px;top:849px;width:30px;height:82px;background:#b3d1e6;"></div>
<div style="position:absolute;left:1489px;top:791px;width:30px;height:140px;background:#356f8a;"></div>
<div style="position:absolute;left:1534px;top:857px;width:30px;height:74px;background:#b3d1e6;"></div>
<div style="position:absolute;left:1573px;top:845px;width:30px;height:86px;background:#356f8a;"></div>
<div style="position:absolute;left:1618px;top:833px;width:30px;height:98px;background:#b3d1e6;"></div>
<div style="position:absolute;left:1658px;top:789px;width:29px;height:142px;background:#356f8a;"></div>
<div style="position:absolute;left:1704px;top:855px;width:30px;height:76px;background:#b3d1e6;"></div>
<div style="position:absolute;left:1743px;top:791px;width:30px;height:140px;background:#356f8a;"></div>
<div style="position:absolute;left:1788px;top:828px;width:30px;height:103px;background:#b3d1e6;"></div>
<div style="position:absolute;left:1827px;top:753px;width:30px;height:178px;background:#356f8a;"></div>
<div style="position:absolute;left:850px;top:724px;width:2px;height:208px;background:#000;"></div>
<div style="position:absolute;left:850px;top:931px;width:1014px;height:1px;background:#000;"></div>
<div style="position:absolute;left:850px;top:932px;width:1014px;height:1px;background:rgba(0,0,0,0.5);"></div>
<div style="position:absolute;left:842px;top:724px;width:9px;height:1px;background:#000;"></div>
<div style="position:absolute;left:842px;top:725px;width:9px;height:1px;background:rgba(0,0,0,0.5);"></div>
<div style="position:absolute;top:718.06px;font-size:16px;line-height:16px;font-weight:normal;color:#111;white-space:nowrap;letter-spacing:1.6px;left:-167.50px;width:1000px;text-align:right;">400.000</div>
<div style="position:absolute;left:842px;top:777px;width:9px;height:1px;background:#000;"></div>
<div style="position:absolute;left:842px;top:778px;width:9px;height:1px;background:rgba(0,0,0,0.5);"></div>
<div style="position:absolute;top:770.56px;font-size:16px;line-height:16px;font-weight:normal;color:#111;white-space:nowrap;letter-spacing:1.6px;left:-167.50px;width:1000px;text-align:right;">300.000</div>
<div style="position:absolute;left:842px;top:828px;width:9px;height:1px;background:#000;"></div>
<div style="position:absolute;left:842px;top:829px;width:9px;height:1px;background:rgba(0,0,0,0.5);"></div>
<div style="position:absolute;top:821.86px;font-size:16px;line-height:16px;font-weight:normal;color:#111;white-space:nowrap;letter-spacing:1.6px;left:-167.50px;width:1000px;text-align:right;">200.000</div>
<div style="position:absolute;left:842px;top:881px;width:9px;height:1px;background:#000;"></div>
<div style="position:absolute;left:842px;top:882px;width:9px;height:1px;background:rgba(0,0,0,0.5);"></div>
<div style="position:absolute;top:874.16px;font-size:16px;line-height:16px;font-weight:normal;color:#111;white-space:nowrap;letter-spacing:1.6px;left:-167.50px;width:1000px;text-align:right;">100.000</div>
<div style="position:absolute;left:842px;top:931px;width:9px;height:1px;background:#000;"></div>
<div style="position:absolute;left:842px;top:932px;width:9px;height:1px;background:rgba(0,0,0,0.5);"></div>
<div style="position:absolute;top:924.66px;font-size:16px;line-height:16px;font-weight:normal;color:#111;white-space:nowrap;letter-spacing:1.6px;left:-167.50px;width:1000px;text-align:right;">0</div>
<div style="position:absolute;left:891px;top:931px;width:2px;height:8px;background:#000;"></div>
<div style="position:absolute;top:952.86px;font-size:16px;line-height:16px;font-weight:normal;color:#111;white-space:nowrap;letter-spacing:1.1px;left:392.00px;width:1000px;text-align:center;">JAN</div>
<div style="position:absolute;left:977px;top:931px;width:2px;height:8px;background:#000;"></div>
<div style="position:absolute;top:952.86px;font-size:16px;line-height:16px;font-weight:normal;color:#111;white-space:nowrap;letter-spacing:1.1px;left:477.80px;width:1000px;text-align:center;">FEV</div>
<div style="position:absolute;left:1061px;top:931px;width:2px;height:8px;background:#000;"></div>
<div style="position:absolute;top:952.86px;font-size:16px;line-height:16px;font-weight:normal;color:#111;white-space:nowrap;letter-spacing:1.1px;left:561.70px;width:1000px;text-align:center;">MAR</div>
<div style="position:absolute;left:1145px;top:931px;width:2px;height:8px;background:#000;"></div>
<div style="position:absolute;top:952.86px;font-size:16px;line-height:16px;font-weight:normal;color:#111;white-space:nowrap;letter-spacing:1.1px;left:645.60px;width:1000px;text-align:center;">ABR</div>
<div style="position:absolute;left:1230px;top:931px;width:2px;height:8px;background:#000;"></div>
<div style="position:absolute;top:952.86px;font-size:16px;line-height:16px;font-weight:normal;color:#111;white-space:nowrap;letter-spacing:1.1px;left:731.10px;width:1000px;text-align:center;">MAI</div>
<div style="position:absolute;left:1314px;top:931px;width:2px;height:8px;background:#000;"></div>
<div style="position:absolute;top:952.86px;font-size:16px;line-height:16px;font-weight:normal;color:#111;white-space:nowrap;letter-spacing:1.1px;left:815.00px;width:1000px;text-align:center;">JUN</div>
<div style="position:absolute;left:1398px;top:931px;width:2px;height:8px;background:#000;"></div>
<div style="position:absolute;top:952.86px;font-size:16px;line-height:16px;font-weight:normal;color:#111;white-space:nowrap;letter-spacing:1.1px;left:899.10px;width:1000px;text-align:center;">JUL</div>
<div style="position:absolute;left:1484px;top:931px;width:2px;height:8px;background:#000;"></div>
<div style="position:absolute;top:952.86px;font-size:16px;line-height:16px;font-weight:normal;color:#111;white-space:nowrap;letter-spacing:1.1px;left:984.70px;width:1000px;text-align:center;">AGO</div>
<div style="position:absolute;left:1568px;top:931px;width:2px;height:8px;background:#000;"></div>
<div style="position:absolute;top:952.86px;font-size:16px;line-height:16px;font-weight:normal;color:#111;white-space:nowrap;letter-spacing:1.1px;left:1068.70px;width:1000px;text-align:center;">SET</div>
<div style="position:absolute;left:1652px;top:931px;width:2px;height:8px;background:#000;"></div>
<div style="position:absolute;top:952.86px;font-size:16px;line-height:16px;font-weight:normal;color:#111;white-space:nowrap;letter-spacing:1.1px;left:1152.90px;width:1000px;text-align:center;">OUT</div>
<div style="position:absolute;left:1737px;top:931px;width:2px;height:8px;background:#000;"></div>
<div style="position:absolute;top:952.86px;font-size:16px;line-height:16px;font-weight:normal;color:#111;white-space:nowrap;letter-spacing:1.1px;left:1238.00px;width:1000px;text-align:center;">NOV</div>
<div style="position:absolute;left:1821px;top:931px;width:2px;height:8px;background:#000;"></div>
<div style="position:absolute;top:952.86px;font-size:16px;line-height:16px;font-weight:normal;color:#111;white-space:nowrap;letter-spacing:1.1px;left:1322.00px;width:1000px;text-align:center;">DEZ</div>
<div style="position:absolute;left:1167px;top:1001px;width:26px;height:26px;background:#b3d1e6;box-sizing:border-box;border:1px solid #9fc3dc;"></div>
<div style="position:absolute;top:1006.71px;font-size:17px;line-height:17px;font-weight:normal;color:#111;white-space:nowrap;letter-spacing:1.0px;left:1199.50px;">Qtd Itens Anterior</div>
<div style="position:absolute;left:1371px;top:1001px;width:26px;height:26px;background:#356f8a;box-sizing:border-box;border:2px solid #1d5673;"></div>
<div style="position:absolute;top:1006.71px;font-size:17px;line-height:17px;font-weight:normal;color:#111;white-space:nowrap;letter-spacing:1.0px;left:1403.50px;">Qtd Itens Atual</div>
<svg style="position:absolute;left:1140px;top:270px" width="240" height="130" viewBox="0 0 240 130">
<path d="M55 46 L230.5 46 L230.5 14" stroke="#000" stroke-opacity="0.28" stroke-width="2" fill="none" transform="translate(1.5,1.5)"/>
<path d="M53.7 12.7 L228 12.7 L228 44 L53.7 44 L53.7 38 L45 29.4 L53.7 20.5 Z" fill="rgba(255,255,255,0.85)" stroke="#0b4b6a" stroke-width="3"/>
<path d="M18.5 123.5 L181.5 123.5 L181.5 92" stroke="#000" stroke-opacity="0.25" stroke-width="2" fill="none" transform="translate(1.5,1)"/>
<path d="M17.7 90.9 L181.2 90.9 L181.2 122.2 L17.7 122.2 L17.7 115.5 L8.5 106.9 L17.7 98.5 Z" fill="rgba(255,255,255,0.85)" stroke="#a6cae2" stroke-width="3"/>
</svg>
<div style="position:absolute;top:292.66px;font-size:16px;line-height:16px;font-weight:normal;color:#111;white-space:nowrap;letter-spacing:1.35px;left:1204.50px;">R$ 13.156.123,90</div>
<div style="position:absolute;top:368.76px;font-size:16px;line-height:16px;font-weight:normal;color:#111;white-space:nowrap;letter-spacing:1.35px;left:1168.00px;">R$ 7.540.104,56</div>
</body></html>
